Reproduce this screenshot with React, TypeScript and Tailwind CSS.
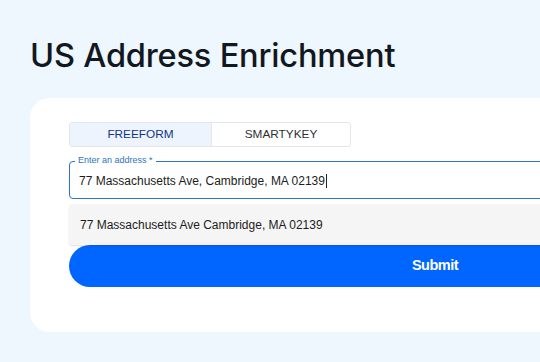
import React from "react";

const sys = { fontFamily: "'Liberation Sans', Arial, sans-serif" };

export default function App() {
  return (
    <div
      className="w-[540px] h-[362px] overflow-hidden bg-[#eef6fe]"
      style={{ fontFamily: "Inter, 'Noto Sans', sans-serif" }}
    >
      <div className="pl-[30px] pt-[36px]">
        <h1 className="text-[32.6px] leading-[38px] font-medium text-[#121820] tracking-[-0.2px]">
          US Address Enrichment
        </h1>
        <div className="mt-[24px] w-[800px] h-[234px] bg-white rounded-[20px] pl-[39px] pt-[24px]" style={sys}>
          <div className="flex w-[282px] h-[25px] border border-[#e3e6ea] rounded-[3px] overflow-hidden text-[11.8px]">
            <div className="w-[142px] flex items-center justify-center bg-[#edf4fd] text-[#10338a] border-r border-[#e3e6ea]">
              FREEFORM
            </div>
            <div className="flex-1 flex items-center justify-center text-[#2d2f33]">
              SMARTYKEY
            </div>
          </div>
          <div className="relative mt-[14px] w-[732px]">
            <div className="h-[38px] border-[1.5px] border-[#2f74c0] rounded-[4px] flex items-center pl-[9px] pt-[1px] text-[12px] text-[#1b1d20]">
              <span>77 Massachusetts Ave, Cambridge, MA 02139</span>
              <span className="inline-block w-px h-[14px] bg-[#222] ml-px" />
            </div>
            <div className="absolute left-[6px] -top-[6px] px-[3px] bg-white text-[9px] leading-[11px] text-[#2f74c0]">
              Enter an address *
            </div>
            <div className="absolute left-0 right-0 top-[43px] h-[41px] bg-[#f5f5f5] rounded-[3px] shadow-[0_1px_2px_rgba(0,0,0,0.12)] flex items-center pl-[11px] text-[12px] text-[#1b1d20] z-10">
              77 Massachusetts Ave Cambridge, MA 02139
            </div>
          </div>
          <button className="mt-[46px] w-[732px] h-[42px] rounded-full bg-[#0066ff] text-white text-[14.5px] tracking-[-0.5px] font-bold flex items-center justify-center">
            Submit
          </button>
        </div>
      </div>
    </div>
  );
}
